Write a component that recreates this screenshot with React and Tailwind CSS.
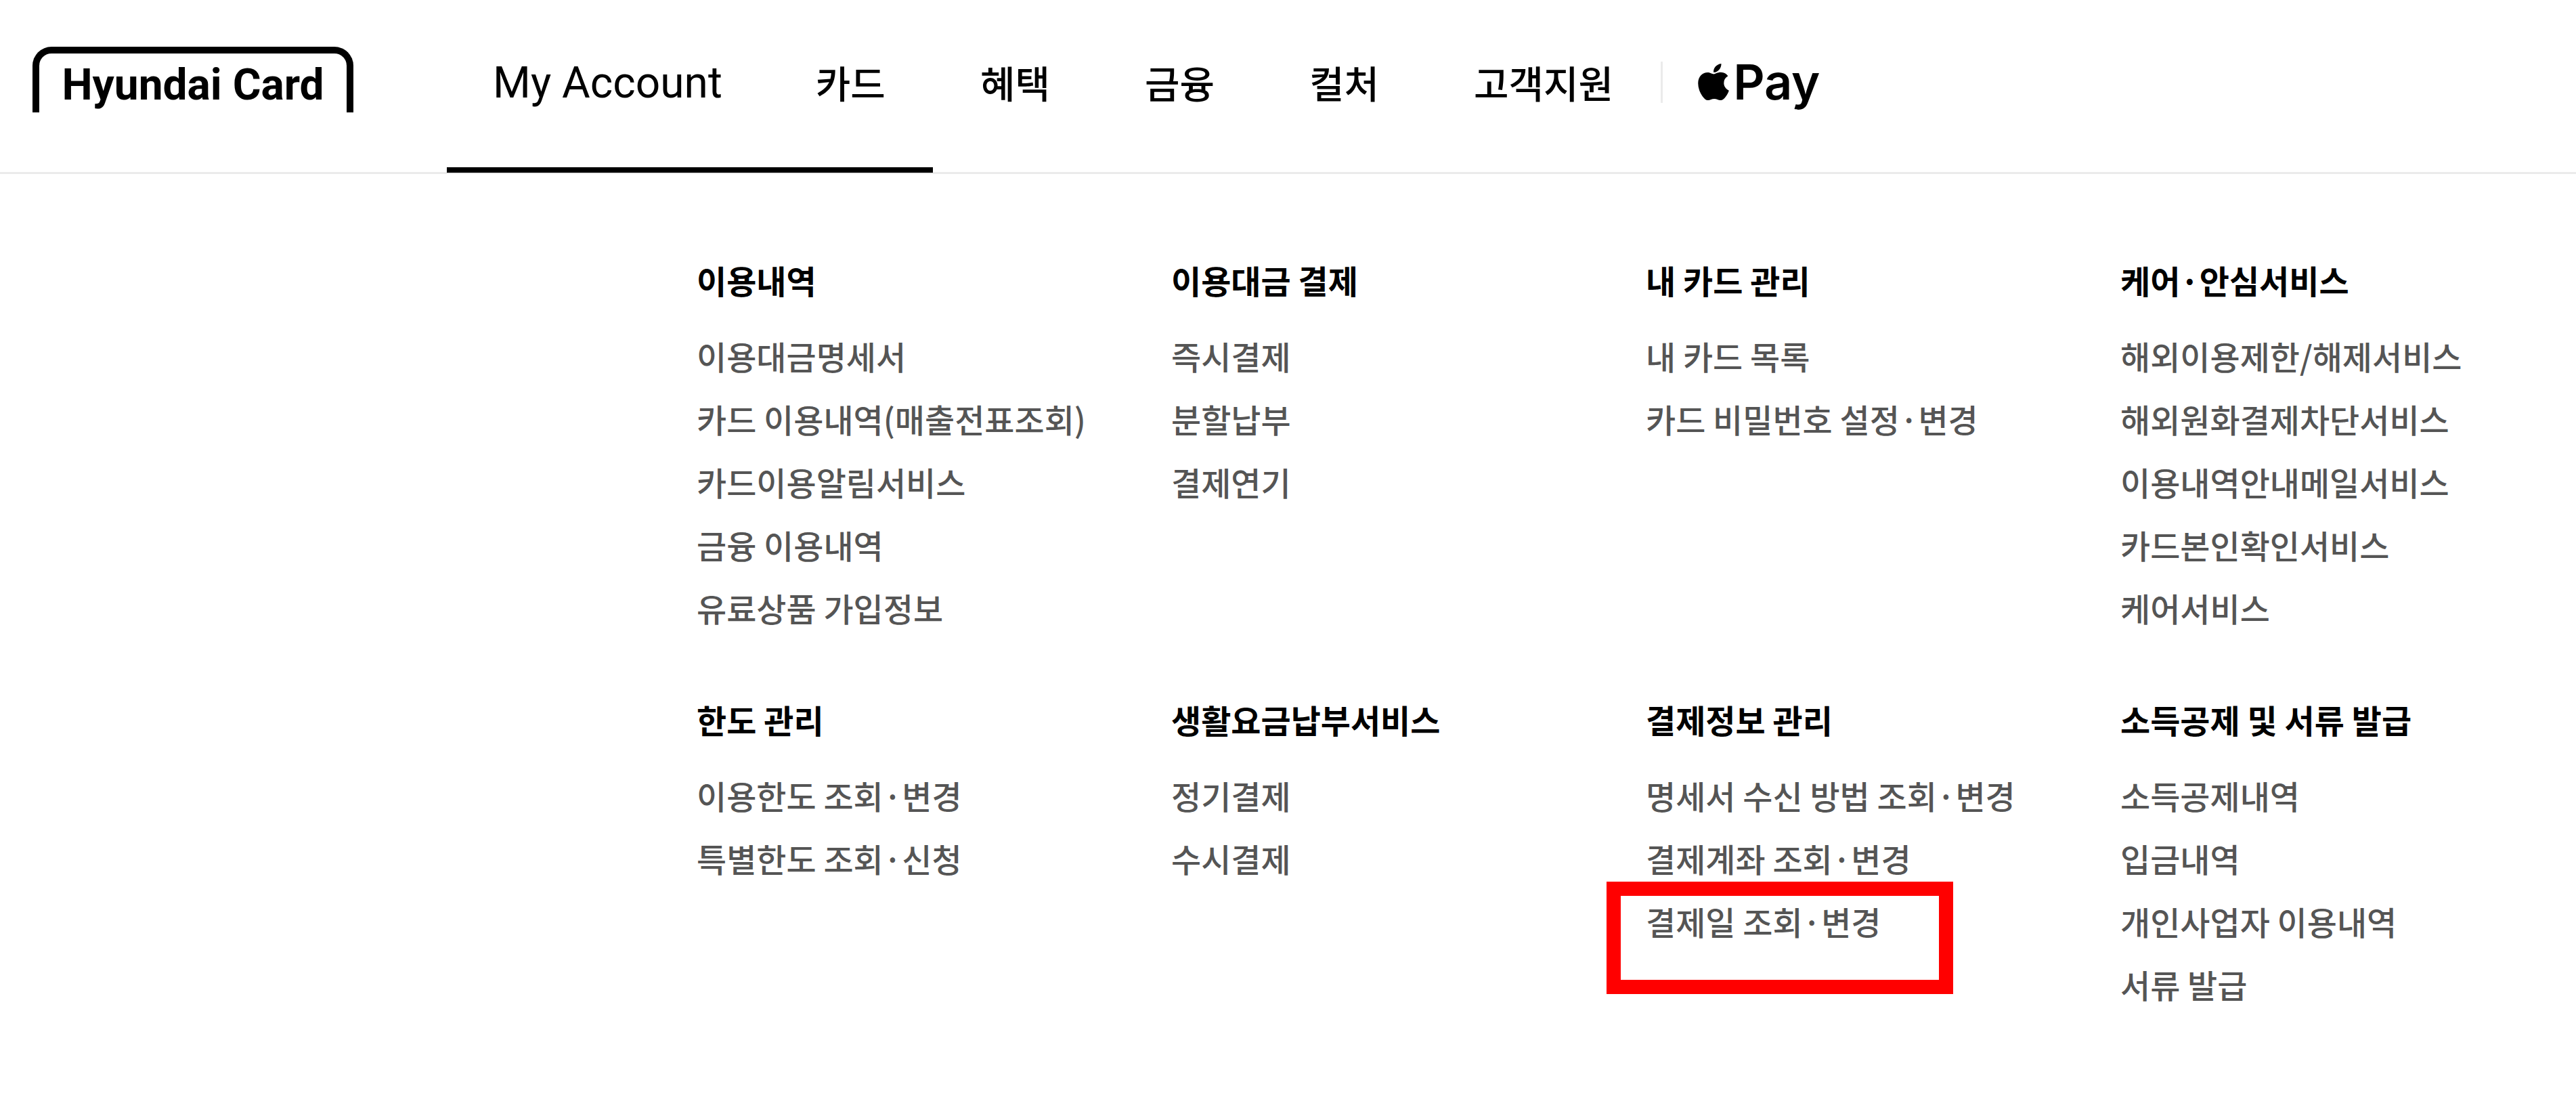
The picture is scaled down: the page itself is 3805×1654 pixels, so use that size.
import React from "react";
import { FaApple } from "react-icons/fa";

const mainMenu = ["혜택", "금융", "컬처", "고객지원"];

const sections = [
  {
    title: "이용내역",
    items: [
      "이용대금명세서",
      "카드 이용내역(매출전표조회)",
      "카드이용알림서비스",
      "금융 이용내역",
      "유료상품 가입정보",
    ],
  },
  {
    title: "이용대금 결제",
    items: ["즉시결제", "분할납부", "결제연기"],
  },
  {
    title: "내 카드 관리",
    items: ["내 카드 목록", "카드 비밀번호 설정·변경"],
  },
  {
    title: "케어·안심서비스",
    items: [
      "해외이용제한/해제서비스",
      "해외원화결제차단서비스",
      "이용내역안내메일서비스",
      "카드본인확인서비스",
      "케어서비스",
    ],
  },
  {
    title: "한도 관리",
    items: ["이용한도 조회·변경", "특별한도 조회·신청"],
  },
  {
    title: "생활요금납부서비스",
    items: ["정기결제", "수시결제"],
  },
  {
    title: "결제정보 관리",
    items: ["명세서 수신 방법 조회·변경", "결제계좌 조회·변경", "결제일 조회·변경"],
    marked: "결제일 조회·변경",
  },
  {
    title: "소득공제 및 서류 발급",
    items: ["소득공제내역", "입금내역", "개인사업자 이용내역", "서류 발급"],
  },
];

const Logo = () => (
  <a
    href="#"
    className="flex h-[97px] w-[474px] shrink-0 items-center justify-center rounded-t-[28px] border-[10px] border-b-0 border-black pt-2 font-['Roboto',sans-serif] text-[64px] leading-none font-bold whitespace-nowrap"
  >
    Hyundai Card
  </a>
);

const Header = () => (
  <header className="flex h-[257px] items-stretch border-b-[3px] border-[#ebebeb] pl-12">
    <div className="flex items-center pb-5">
      <Logo />
    </div>
    <nav className="ml-[138px] flex items-stretch text-[56px] font-medium whitespace-nowrap">
      {/* active group with the underline */}
      <div className="relative flex items-stretch">
        <a
          href="#"
          className="flex items-center px-[68px] pb-2 font-['Roboto',sans-serif] text-[64px] font-normal"
        >
          My Account
        </a>
        <a href="#" className="flex items-center px-[70px] pb-3">
          카드
        </a>
        <span className="absolute inset-x-0 -bottom-px h-2 bg-black" />
      </div>
      {mainMenu.map((menu) => (
        <a key={menu} href="#" className="flex items-center px-[70px] pb-3">
          {menu}
        </a>
      ))}
    </nav>
    <div className="flex items-center pb-3">
      <span className="h-[61px] w-[3px] bg-[#ebebeb]" />
      <a
        href="#"
        className="ml-[50px] flex items-center gap-1 font-['Inter',sans-serif] text-[72px] leading-none font-semibold"
      >
        <FaApple className="h-[62px] w-[50px]" />
        Pay
      </a>
    </div>
  </header>
);

const MenuSection = ({ title, items, marked }) => (
  <section>
    <h2 className="mb-8 leading-[68px] font-bold text-black">{title}</h2>
    <ul className="font-medium text-[#555555]">
      {items.map((item) => (
        <li key={item} className="relative leading-[93px]">
          <a href="#">{item}</a>
          {item === marked && (
            <span className="pointer-events-none absolute -top-3 -left-[58px] h-[166px] w-[512px] border-[21px] border-[#ff0000]" />
          )}
        </li>
      ))}
    </ul>
  </section>
);

const App = () => {
  return (
    <div className="min-h-screen bg-white font-['Noto_Sans_CJK_KR',sans-serif] text-black">
      <Header />
      <main className="grid grid-cols-4 gap-x-7 gap-y-[84px] pt-[122px] pb-24 pl-[1029px] text-[48px] whitespace-nowrap">
        {sections.map((section) => (
          <MenuSection key={section.title} {...section} />
        ))}
      </main>
    </div>
  );
};

export default App;
